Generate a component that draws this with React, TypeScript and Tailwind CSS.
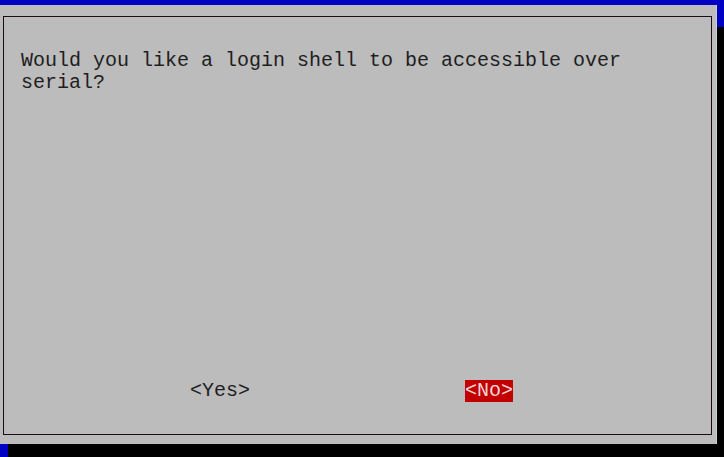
export default function App() {
  return (
    <div
      className="relative w-[724px] h-[457px] overflow-hidden bg-[#0000c4] pt-[5px]"
      style={{ fontFamily: '"Liberation Mono", "DejaVu Sans Mono", monospace' }}
    >
      {/* dialog shadow */}
      <div className="absolute left-[8px] top-[27px] right-0 bottom-0 bg-black" />

      <div className="relative w-[717px] h-[439px] bg-[#bcbcbc] pl-[3px] pt-[11px] border-r border-[#c9d0d0]">
        <div className="flex flex-col w-[709px] h-[419px] border border-[#1c0c16] pt-[33px] pb-[32px] pl-[17px] text-[20px] leading-[22px] text-[#1e1e1e]">
          <p>Would you like a login shell to be accessible over</p>
          <p>serial?</p>
          <div className="flex-1" />
          <div className="flex h-[22px]">
            <span className="ml-[169px]">&lt;Yes&gt;</span>
            <span className="ml-[215px] bg-[#c20000] text-[#f6d6d6]">&lt;No&gt;</span>
          </div>
        </div>
      </div>
    </div>
  )
}
